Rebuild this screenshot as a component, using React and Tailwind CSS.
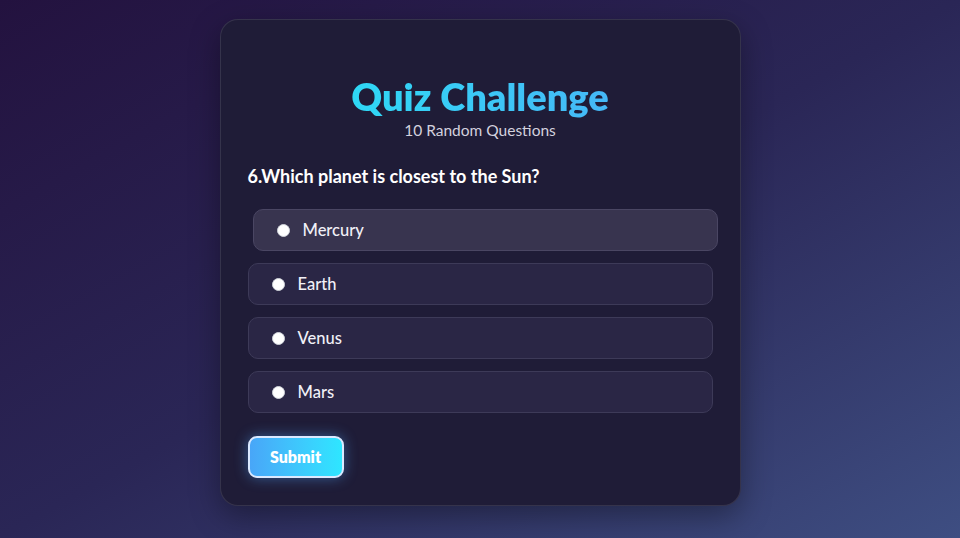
import React, { useState } from "react";

const options = ["Mercury", "Earth", "Venus", "Mars"];

function Option({ label, active }) {
  return (
    <label
      className={`flex items-center h-[42px] pl-[23px] gap-[13px] rounded-[10px] border cursor-pointer ${
        active
          ? "translate-x-[5px] bg-[#38344f] border-[#4a4663]"
          : "bg-[#2a2645] border-[#3d3a58]"
      }`}
    >
      <span className="w-[13px] h-[13px] rounded-full bg-white border border-gray-300 shrink-0" />
      <span className="text-[16.5px] font-medium text-[#f1f0f7]">{label}</span>
    </label>
  );
}

export default function App() {
  const [hovered] = useState(0);

  return (
    <div
      className="w-full h-[538px] flex justify-center pt-[19px] bg-gradient-to-br from-[#23123f] via-[#2a2656] to-[#3e4e82]"
      style={{ fontFamily: "Lato, 'Noto Sans', sans-serif" }}
    >
      <div className="w-[521px] h-[487px] rounded-[18px] bg-[#1f1c37] border border-white/10 shadow-[0_10px_30px_rgba(0,0,0,0.35)] px-[27px] pt-[54px] pb-7 flex flex-col">
        <div className="flex flex-col items-center">
          <h1 className="text-[38px] leading-[44px] font-extrabold bg-gradient-to-r from-[#2ed8f5] to-[#45b8f7] bg-clip-text text-transparent">
            Quiz Challenge
          </h1>
          <p className="mt-[2px] text-[15.5px] leading-5 text-[#d3d1de]">10 Random Questions</p>
        </div>

        <h2 className="mt-[23px] text-[18px] leading-[27px] font-bold text-white">
          6.Which planet is closest to the Sun?
        </h2>

        <div className="mt-[19px] flex flex-col gap-3">
          {options.map((o, i) => (
            <Option key={o} label={o} active={i === hovered} />
          ))}
        </div>

        <div className="mt-[23px]">
          <button className="w-[96px] h-[42px] rounded-[9px] border-2 border-[#dbe9ff] bg-gradient-to-r from-[#48a6f8] to-[#2ee6ff] text-white text-[16px] font-extrabold shadow-[0_0_14px_rgba(80,170,255,0.45)]">
            Submit
          </button>
        </div>
      </div>
    </div>
  );
}
